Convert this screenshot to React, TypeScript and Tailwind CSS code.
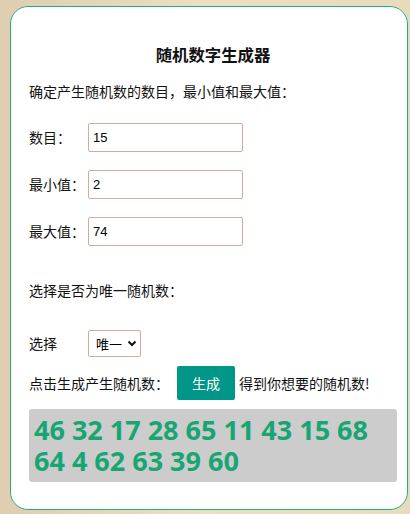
import { useState } from "react";

const cn = { fontFamily: '"Noto Sans CJK SC", "Noto Sans", sans-serif' };

function Field({ label, value }: { label: string; value: string }) {
  return (
    <div className="flex items-center h-[29px]">
      <span className="w-[59px] text-[14px] text-[#111]">{label}</span>
      <input
        className="w-[155px] h-[29px] border border-[#d3ab97] rounded-[2px] pl-[4px] text-[13px] text-black outline-none"
        style={{ fontFamily: '"Liberation Sans", Arial, sans-serif' }}
        defaultValue={value}
      />
    </div>
  );
}

export default function App() {
  const [nums] = useState([46, 32, 17, 28, 65, 11, 43, 15, 68, 64, 4, 62, 63, 39, 60]);

  return (
    <div
      className="w-[410px] h-[514px] pl-[10px] pr-[2px] pt-[6px] bg-gradient-to-r from-[#dfcdb0] via-[#ebdfc4] to-[#e8dbbd]"
      style={cn}
    >
      <div className="h-[504px] bg-white border border-[#21b27c] rounded-[18px] pt-[36px] pl-[18px] pr-[10px]">
        <h3 className="text-center font-bold text-[16.4px] leading-[22px] text-[#111]">随机数字生成器</h3>
        <p className="mt-[16px] text-[14px] leading-[20px] text-[#111]">确定产生随机数的数目，最小值和最大值：</p>

        <div className="mt-[22px] flex flex-col gap-[18px]">
          <Field label="数目：" value="15" />
          <Field label="最小值：" value="2" />
          <Field label="最大值：" value="74" />
        </div>

        <p className="mt-[34px] text-[14px] leading-[20px] text-[#111]">选择是否为唯一随机数：</p>

        <div className="mt-[30px] flex items-center h-[27px]">
          <span className="w-[59px] text-[14px] text-[#111]">选择</span>
          <div className="w-[53px] h-[27px] border border-[#d3ab97] rounded-[2px] flex items-center pl-[7px] gap-[5px]">
            <span className="text-[13px] text-black">唯一</span>
            <svg width="10" height="7" viewBox="0 0 10 7">
              <path d="M1.5 1.5 L5 5 L8.5 1.5" fill="none" stroke="#111" strokeWidth="2" />
            </svg>
          </div>
        </div>

        <div className="mt-[9px] flex items-center h-[34px] text-[14px] text-[#111]">
          <span>点击生成产生随机数：</span>
          <button className="ml-[8px] w-[58px] h-[34px] bg-[#009688] text-white rounded-[2px] text-[14px]">生成</button>
          <span className="ml-[4px]">得到你想要的随机数!</span>
        </div>

        <div
          className="mt-[9px] w-[368px] h-[73px] bg-[#cccccc] rounded-[3px] px-[5px] py-[5px] text-[27px] leading-[31px] font-bold text-[#17a673]"
          style={{ fontFamily: '"Open Sans", "Noto Sans", sans-serif' }}
        >
          {nums.join(" ")}
        </div>
      </div>
    </div>
  );
}
